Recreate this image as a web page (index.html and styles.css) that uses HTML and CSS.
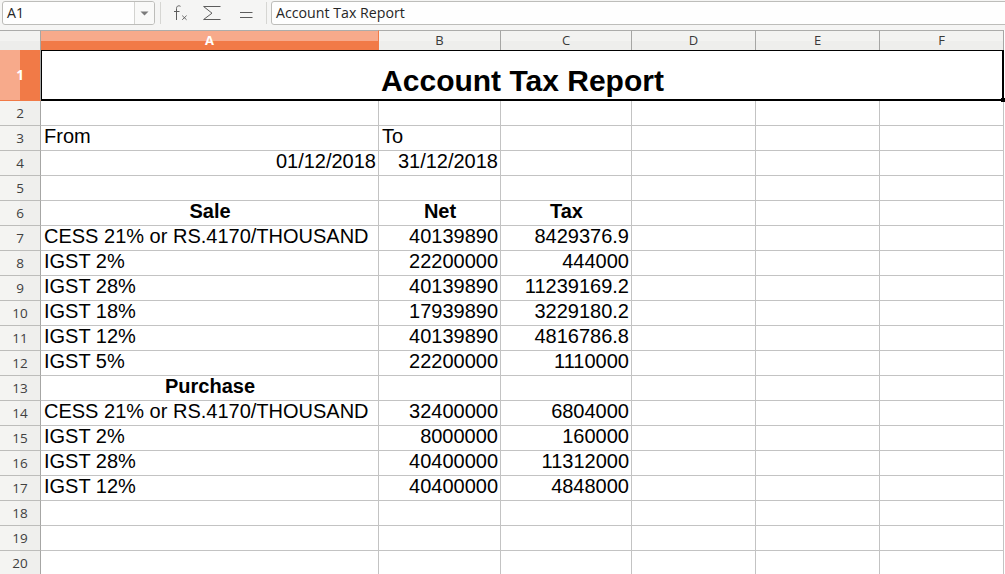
FILE: index.html
```html
<!DOCTYPE html>
<html>
<head>
<meta charset="utf-8">
<title>Account Tax Report</title>
<link rel="stylesheet" href="styles.css">
</head>
<body>
<div class="toolbar">
  <div class="namebox">
    <span class="name">A1</span>
    <span class="dd"><svg width="9" height="5" viewBox="0 0 9 5"><path d="M0.5 0.5 H8.5 L4.5 4.5 Z" fill="#7b7b7b"/></svg></span>
  </div>
  <span class="sep"></span>
  <svg class="icons" width="105" height="24" viewBox="0 0 105 24">
    <g fill="none" stroke="#5c5c5c" stroke-width="1">
      <path d="M19.5 5.3 C18.2 4.5 15.5 4.4 15.5 7.6 V19"/>
      <path d="M13 10.5 H18.5"/>
      <path d="M21.2 14.6 L25.6 18.8 M25.6 14.6 L21.2 18.8" stroke-width="0.9"/>
      <path d="M59.5 5.5 H42.6 L51 12.2 L42.6 18.5 H59.5"/>
      <path d="M79 11.5 H91.5 M79 16.5 H91.5"/>
    </g>
  </svg>
  <span class="sep sep2"></span>
  <div class="formula">Account Tax Report</div>
</div>

<div class="sheet">
  <div class="corner"></div>
  <div class="ch act">A</div>
  <div class="ch">B</div>
  <div class="ch">C</div>
  <div class="ch">D</div>
  <div class="ch">E</div>
  <div class="ch">F</div>

  <div class="rh act">1</div>
  <div class="title">Account Tax Report</div>

  <div class="rh">2</div>
  <div class="c"></div><div class="c"></div><div class="c"></div><div class="c"></div><div class="c"></div><div class="c"></div>

  <div class="rh">3</div>
  <div class="c">From</div><div class="c">To</div><div class="c"></div><div class="c"></div><div class="c"></div><div class="c"></div>

  <div class="rh">4</div>
  <div class="c r">01/12/2018</div><div class="c r">31/12/2018</div><div class="c"></div><div class="c"></div><div class="c"></div><div class="c"></div>

  <div class="rh">5</div>
  <div class="c"></div><div class="c"></div><div class="c"></div><div class="c"></div><div class="c"></div><div class="c"></div>

  <div class="rh">6</div>
  <div class="c h">Sale</div><div class="c h">Net</div><div class="c h">Tax</div><div class="c"></div><div class="c"></div><div class="c"></div>

  <div class="rh">7</div>
  <div class="c">CESS 21% or RS.4170/THOUSAND</div><div class="c r">40139890</div><div class="c r">8429376.9</div><div class="c"></div><div class="c"></div><div class="c"></div>

  <div class="rh">8</div>
  <div class="c">IGST 2%</div><div class="c r">22200000</div><div class="c r">444000</div><div class="c"></div><div class="c"></div><div class="c"></div>

  <div class="rh">9</div>
  <div class="c">IGST 28%</div><div class="c r">40139890</div><div class="c r">11239169.2</div><div class="c"></div><div class="c"></div><div class="c"></div>

  <div class="rh">10</div>
  <div class="c">IGST 18%</div><div class="c r">17939890</div><div class="c r">3229180.2</div><div class="c"></div><div class="c"></div><div class="c"></div>

  <div class="rh">11</div>
  <div class="c">IGST 12%</div><div class="c r">40139890</div><div class="c r">4816786.8</div><div class="c"></div><div class="c"></div><div class="c"></div>

  <div class="rh">12</div>
  <div class="c">IGST 5%</div><div class="c r">22200000</div><div class="c r">1110000</div><div class="c"></div><div class="c"></div><div class="c"></div>

  <div class="rh">13</div>
  <div class="c h">Purchase</div><div class="c"></div><div class="c"></div><div class="c"></div><div class="c"></div><div class="c"></div>

  <div class="rh">14</div>
  <div class="c">CESS 21% or RS.4170/THOUSAND</div><div class="c r">32400000</div><div class="c r">6804000</div><div class="c"></div><div class="c"></div><div class="c"></div>

  <div class="rh">15</div>
  <div class="c">IGST 2%</div><div class="c r">8000000</div><div class="c r">160000</div><div class="c"></div><div class="c"></div><div class="c"></div>

  <div class="rh">16</div>
  <div class="c">IGST 28%</div><div class="c r">40400000</div><div class="c r">11312000</div><div class="c"></div><div class="c"></div><div class="c"></div>

  <div class="rh">17</div>
  <div class="c">IGST 12%</div><div class="c r">40400000</div><div class="c r">4848000</div><div class="c"></div><div class="c"></div><div class="c"></div>

  <div class="rh">18</div>
  <div class="c"></div><div class="c"></div><div class="c"></div><div class="c"></div><div class="c"></div><div class="c"></div>

  <div class="rh">19</div>
  <div class="c"></div><div class="c"></div><div class="c"></div><div class="c"></div><div class="c"></div><div class="c"></div>

  <div class="rh">20</div>
  <div class="c"></div><div class="c"></div><div class="c"></div><div class="c"></div><div class="c"></div><div class="c"></div>
</div>
</body>
</html>
```

FILE: styles.css
```css
html, body {
  margin: 0;
  padding: 0;
}
body {
  width: 1005px;
  height: 574px;
  overflow: hidden;
  background: #ffffff;
  font-family: "Liberation Sans", Arial, sans-serif;
  color: #000;
}

/* ---------- toolbar ---------- */
.toolbar {
  display: flex;
  align-items: flex-start;
  height: 30px;
  box-sizing: border-box;
  padding: 1px 0 0 2px;
  background: #f5f5f4;
  overflow: hidden;
}
.namebox {
  flex: none;
  display: flex;
  width: 153px;
  height: 24px;
  box-sizing: border-box;
  border: 1px solid #bdbdba;
  border-radius: 3px;
  background: #fefefe;
  overflow: hidden;
}
.namebox .name {
  flex: 1;
  padding-left: 4px;
  font-family: "Open Sans", "DejaVu Sans", sans-serif;
  font-size: 14.2px;
  line-height: 22px;
  color: #262626;
}
.namebox .dd {
  flex: none;
  width: 19px;
  border-left: 1px solid #d3d3d0;
  display: flex;
  align-items: center;
  justify-content: center;
  background: #f9f9f8;
}
.sep {
  flex: none;
  width: 1px;
  height: 22px;
  margin: 1px 0 0 5px;
  background: #d6d6d3;
}
.icons {
  flex: none;
  display: block;
}
.sep2 {
  margin-left: 0;
}
.formula {
  flex: 1;
  height: 24px;
  box-sizing: border-box;
  margin: 0 -8px 0 4px;
  border: 1px solid #bdbdba;
  border-radius: 3px;
  background: #fefefe;
  padding-left: 4px;
  font-family: "Open Sans", "DejaVu Sans", sans-serif;
  font-size: 14.2px;
  line-height: 22px;
  color: #262626;
  white-space: nowrap;
}

/* ---------- sheet ---------- */
.sheet {
  display: grid;
  grid-template-columns: 41px 338px 122px 131px 124px 124px 124px;
  grid-template-rows: 20px 51px repeat(19, 25px);
  width: 1004px;
}
.corner {
  box-sizing: border-box;
  border-top: 1px solid #acacaa;
  border-right: 1px solid #a6a6a4;
  background: linear-gradient(#f3f3f1 0 10px, #ededeb 10px);
}
.ch {
  box-sizing: border-box;
  border-top: 1px solid #acacaa;
  border-right: 1px solid #a6a6a4;
  background: linear-gradient(#f3f3f1 0 10px, #eeeeec 10px);
  text-align: center;
  font-family: "Open Sans", "DejaVu Sans", sans-serif;
  font-size: 13px;
  line-height: 19px;
  color: #3a3a3a;
}
.ch.act {
  background: linear-gradient(#f7aa8b 0 10px, #f17a47 10px);
  border-right-color: #f17a47;
  color: #ffffff;
  font-weight: bold;
}
.rh {
  box-sizing: border-box;
  border-right: 1px solid #a6a6a4;
  border-bottom: 1px solid #bdbdbb;
  background: linear-gradient(90deg, #f4f4f2 0 20px, #efefed 20px);
  text-align: center;
  font-family: "Open Sans", "DejaVu Sans", sans-serif;
  font-size: 13.5px;
  line-height: 24px;
  color: #404040;
}
.rh.act {
  background: linear-gradient(90deg, #f7aa8b 0 20px, #f17a47 20px);
  border-bottom-color: #f17a47;
  color: #ffffff;
  font-weight: bold;
  line-height: 50px;
}
.title {
  grid-column: span 6;
  position: relative;
  box-sizing: border-box;
  padding-top: 14px;
  text-align: center;
  font-weight: bold;
  font-size: 30px;
  line-height: 34px;
  white-space: nowrap;
}
.title::before {
  content: "";
  position: absolute;
  inset: 0;
  border: 1px solid #000;
  border-right-width: 2px;
  border-bottom-width: 2px;
}
.title::after {
  content: "";
  position: absolute;
  right: -1px;
  bottom: -1px;
  width: 4px;
  height: 4px;
  background: #000;
}
.c {
  box-sizing: border-box;
  border-right: 1px solid #c3c3c3;
  border-bottom: 1px solid #c3c3c3;
  padding: 0 2px 0 3px;
  font-size: 20px;
  line-height: 21px;
  white-space: nowrap;
}
.c.r {
  text-align: right;
}
.c.h {
  text-align: center;
  font-weight: bold;
}
```
